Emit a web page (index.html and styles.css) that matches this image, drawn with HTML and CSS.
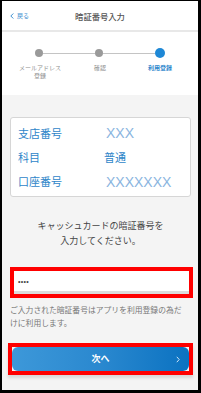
FILE: index.html
```html
<!DOCTYPE html>
<html lang="ja">
<head>
<meta charset="utf-8">
<title>暗証番号入力</title>
<link rel="stylesheet" href="styles.css">
</head>
<body>
<div class="frame">
  <header class="header">
    <a class="back">
      <svg class="back-icon" width="4" height="6" viewBox="0 0 4 6"><polyline points="3.3,0.5 0.8,3 3.3,5.5" fill="none" stroke="#3b8ed0" stroke-width="1"/></svg>
      <span>戻る</span>
    </a>
    <h1 class="title">暗証番号入力</h1>
    <span></span>
  </header>

  <section class="stepper">
    <div class="track">
      <span class="dot"></span>
      <span class="line"></span>
      <span class="dot"></span>
      <span class="line"></span>
      <span class="dot dot-active"></span>
    </div>
    <div class="labels">
      <span class="label">メールアドレス<br>登録</span>
      <span class="label">確認</span>
      <span class="label label-active">利用登録</span>
    </div>
  </section>

  <main class="main">
    <div class="card">
      <div class="row"><span class="key">支店番号</span><span class="val val-x">XXX</span></div>
      <div class="row"><span class="key">科目</span><span class="val">普通</span></div>
      <div class="row"><span class="key">口座番号</span><span class="val val-x val-low">XXXXXXX</span></div>
    </div>

    <p class="prompt">キャッシュカードの暗証番号を<br>入力してください。</p>

    <div class="pin-frame">
      <div class="pin-field">••••</div>
    </div>

    <p class="note">ご入力された暗証番号はアプリを利用登録の為だけに利用します。</p>

    <div class="btn-frame">
      <div class="btn">
        <span></span>
        <span class="btn-text">次へ</span>
        <svg class="btn-icon" width="4" height="7" viewBox="0 0 4 7"><polyline points="0.8,0.8 3.2,3.5 0.8,6.2" fill="none" stroke="#cfe4f5" stroke-width="1"/></svg>
      </div>
    </div>
  </main>
</div>
</body>
</html>
```
FILE: styles.css
```css
html, body {
  margin: 0;
  padding: 0;
}
body {
  font-family: "Noto Sans CJK JP", "Noto Sans", sans-serif;
  background: #000;
}
.frame {
  width: 201px;
  height: 393px;
  box-sizing: border-box;
  border-style: solid;
  border-color: #000;
  border-width: 1px 3px 3px 2px;
  background: #f4f4f4;
  display: flex;
  flex-direction: column;
  overflow: hidden;
}
.header {
  height: 29px;
  background: #fff;
  border-bottom: 2px solid #e8e8e8;
  display: grid;
  grid-template-columns: 1fr auto 1fr;
  align-items: center;
}
.back {
  display: flex;
  align-items: center;
  gap: 3px;
  padding-left: 8px;
  color: #3b8ed0;
  font-size: 6px;
  line-height: 8px;
}
.back-icon {
  display: block;
}
.title {
  margin: 0;
  font-size: 8.3px;
  font-weight: 500;
  color: #555;
  line-height: 10px;
}
.stepper {
  background: #fff;
  padding: 16px 0 15px;
}
.track {
  display: flex;
  align-items: center;
  justify-content: center;
  height: 10px;
  padding-right: 1px;
}
.dot {
  width: 8px;
  height: 8px;
  border-radius: 50%;
  background: #9a9a9a;
}
.dot-active {
  width: 10px;
  height: 10px;
  background: #1e88d6;
}
.line {
  width: 52px;
  height: 1px;
  background: #c4c4c4;
}
.labels {
  display: grid;
  grid-template-columns: repeat(3, 60px);
  justify-content: center;
  margin-top: 6px;
}
.label {
  text-align: center;
  font-size: 6px;
  line-height: 8px;
  color: #8f8f8f;
}
.label-active {
  color: #2d86cc;
  font-weight: 700;
}
.main {
  flex: 1;
  padding: 22px 5px 0 6px;
  display: flex;
  flex-direction: column;
}
.card {
  margin: 0 2px 0 2px;
  background: #fff;
  border: 1px solid #d6d6d6;
  border-radius: 3px;
  padding: 3px 0 3px 7px;
}
.row {
  display: grid;
  grid-template-columns: 86px 1fr;
  align-items: center;
  height: 24px;
}
.key, .val {
  font-size: 11px;
  line-height: 14px;
  color: #2f86c9;
}
.val-x {
  font-family: "Liberation Sans", sans-serif;
  font-size: 14px;
  color: #8ab5e0;
  padding-left: 2px;
}
.val-low {
  padding-top: 2px;
}
.prompt {
  margin: 21px 0 0;
  text-align: center;
  font-size: 9px;
  line-height: 15px;
  color: #444;
}
.pin-frame {
  margin: 19px 0 0 2px;
  border: 4px solid #ff0000;
  background: #fff;
}
.pin-field {
  height: 20px;
  border-bottom: 3px solid #dcdcdc;
  display: flex;
  align-items: center;
  padding-left: 4px;
  font-family: "Liberation Sans", sans-serif;
  font-size: 7px;
  color: #444;
  letter-spacing: 0.3px;
}
.note {
  margin: 5px 0 0 2px;
  width: 178px;
  font-size: 7.8px;
  line-height: 13px;
  color: #777;
}
.btn-frame {
  margin-top: 14px;
  border: 4px solid #ff0000;
  background: #f4f4f4;
  box-shadow: 0 3px 3px rgba(0, 0, 0, 0.12);
}
.btn {
  height: 24px;
  border-radius: 6px;
  background: linear-gradient(90deg, #3d98d9 0%, #2a88cf 50%, #0b72c1 100%);
  display: grid;
  grid-template-columns: 1fr auto 1fr;
  align-items: center;
}
.btn-text {
  color: #fff;
  font-size: 9px;
  font-weight: 700;
  line-height: 12px;
}
.btn-icon {
  justify-self: end;
  margin-right: 9px;
  display: block;
}
```
